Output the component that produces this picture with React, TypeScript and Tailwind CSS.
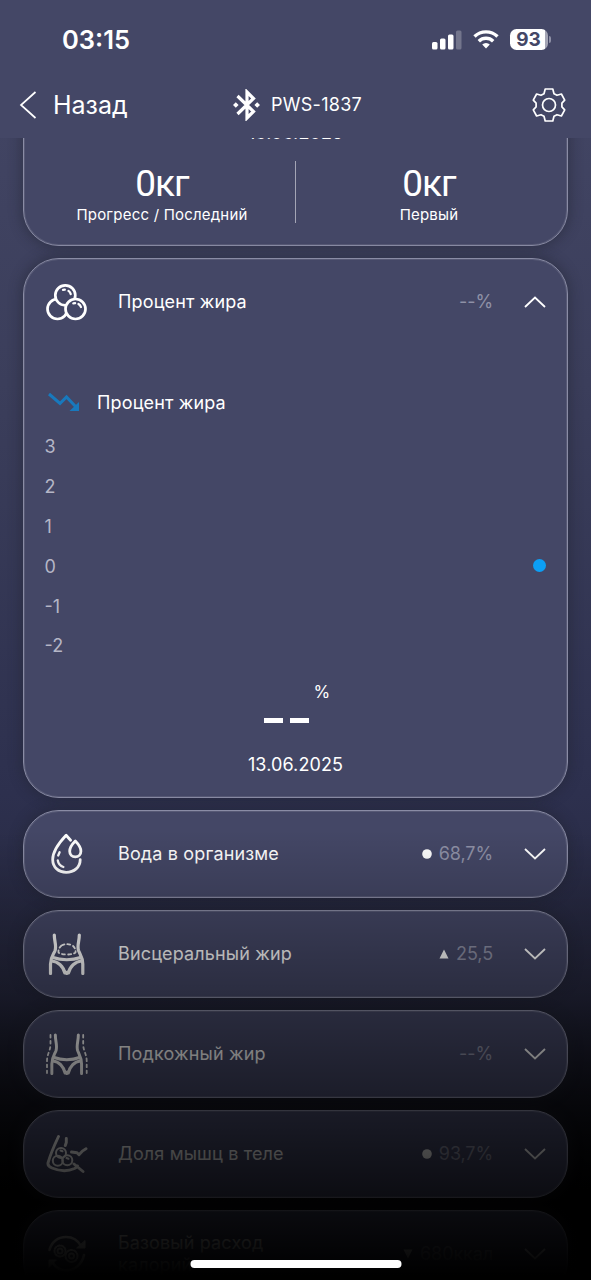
import type { ReactNode } from "react"

type Marker = "dot" | "up" | "down"

interface MetricRowProps {
  icon: ReactNode
  label: string
  value: string
  marker?: Marker
  open?: boolean
}

const CARD =
  "rounded-[36px] border border-[#8a8ca5] bg-[#444766] shadow-[0_0_12px_3px_rgba(32,36,48,0.4),inset_0_0_0_1px_rgba(255,255,255,0.1)]"

function BalloonsIcon() {
  return (
    <svg width="42" height="38" viewBox="0 0 42 38" fill="#444766" stroke="#fff" strokeWidth="2.7" strokeLinecap="round">
      <circle cx="11.5" cy="26" r="10" />
      <circle cx="19.300" cy="12.300" r="10" />
      <circle cx="29.500" cy="26" r="10" />
      <path d="M17 6.900l1.800-.2M22.500 7.900c1.200.8 1.900 1.800 2.200 3.200M27.300 20.300l1.800-.2M32.500 21c1.200.8 2 1.800 2.400 3" strokeWidth="2.300" fill="none" />
    </svg>
  )
}

function WaterIcon() {
  return (
    <svg width="42" height="42" viewBox="0 0 42 42" fill="none" stroke="#fff" strokeWidth="2.800" strokeLinecap="round" strokeLinejoin="round">
      <path d="M24.600 7.300L20.100 2.200C13.500 9.200 6.700 18.600 6.700 26.500c0 8 6 12.800 13.500 12.800 7.800 0 14-5 14-12.600" />
      <path d="M29.300 8c-3 3-5.600 7-5.600 10.200 0 3.300 2.300 5.600 5.600 5.600s5.600-2.300 5.600-5.600C34.900 15 32.300 11 29.300 8z" />
      <path d="M13.600 19.200l-1.400 3.300M11.800 27.500c.5 3.200 2.500 5.500 5.600 6.500" strokeWidth="2.300" />
    </svg>
  )
}

function Torso() {
  return (
    <>
      <path d="M8.300 2c0 7 2.400 10 .8 15.500C7.800 21 4.500 24 4.500 31v9.500M33.300 2c0 7-2.400 10-.8 15.500 1.300 3.500 4.300 6.500 4.300 13.500v9.500" />
      <path d="M7 24.500c8 3 19.500 3 27.500 0M5.800 28c6.200.5 11.700 5.500 13 12M35.500 28c-6.200.5-11.700 5.500-13 12M18 37.500l2.700 3 2.700-3" />
    </>
  )
}

function VisceralIcon() {
  return (
    <svg width="42" height="42" viewBox="0 0 42 42" fill="none" stroke="#fff" strokeWidth="3.200" strokeLinecap="round">
      <Torso />
      <path
        d="M15.500 12.500Q21 9.800 26.500 12.500Q30 15.500 29.500 19.500Q27 21.500 21 21.500Q15 21.500 12.500 19.500Q12 15.500 15.500 12.500z"
        strokeWidth="1.800"
        strokeDasharray="3 3"
      />
    </svg>
  )
}

function SubcutaneousIcon() {
  return (
    <svg width="42" height="42" viewBox="0 0 42 42" fill="none" stroke="#fff" strokeWidth="3.200" strokeLinecap="round">
      <g transform="translate(1.700) scale(.92 1)">
        <Torso />
      </g>
      <path
        d="M4.500 2v9c0 7-3.500 10-3.500 17v12M37.200 2v9c0 7 3.500 10 3.500 17v12"
        strokeWidth="1.800"
        strokeDasharray="2.600 3.400"
      />
    </svg>
  )
}

function MuscleIcon() {
  return (
    <svg width="42" height="40" viewBox="0 0 42 40" fill="none" stroke="#fff" strokeWidth="2.900" strokeLinecap="round" strokeLinejoin="round">
      <path d="M12.500 2.500C8 12 4.500 20 2 29c-.4 2.500 1 3.800 4 5 7 3 16 3.500 22.500.500 2-1 2.800-1.800 3-2.500M28 30l9 7.500M20.300 4.500v4l-1 3M25.500 18l5.500.7 2 2c1.500-2.500 4-4.500 7-6" />
      <g strokeWidth="2">
        <circle cx="15" cy="19" r="5" />
        <circle cx="11.800" cy="26.800" r="5" />
        <circle cx="21.300" cy="26.300" r="5" />
        <path d="M14.500 16.500l2 .8M20.500 24l2 .8" />
      </g>
    </svg>
  )
}

function MetabolismIcon() {
  return (
    <svg width="42" height="40" viewBox="0 0 42 40" fill="none" stroke="#fff" strokeWidth="2.600" strokeLinecap="round" strokeLinejoin="round">
      <path d="M3.500 16C5.500 8 12 3 20 3c7 0 12 3.500 15 9M38 21c-2 9-9 15.500-17.500 15.500-6 0-11-3-14-8" />
      <path d="M39 7v7h-8zM3 33v-7h7z" fill="#fff" strokeWidth="1" />
      <g strokeWidth="2">
        <circle cx="14" cy="17" r="5.500" strokeDasharray="2.200 1.600" />
        <circle cx="14" cy="17" r="2.500" />
        <circle cx="25.500" cy="22" r="6" strokeDasharray="2.200 1.600" />
        <circle cx="25.500" cy="22" r="2.500" />
      </g>
    </svg>
  )
}

function MarkerIcon({ type }: { type: Marker }) {
  return (
    <svg width="10" height="10" viewBox="0 0 10 10" fill="#fff">
      {type === "dot" && <circle cx="5" cy="5" r="4.800" />}
      {type === "up" && <path d="M5 .5L9.500 9.500H.5z" />}
      {type === "down" && <path d="M5 9.500L9.500.5H.5z" />}
    </svg>
  )
}

function MetricRow({ icon, label, value, marker, open }: MetricRowProps) {
  return (
    <div className="flex h-[86px] items-center pr-5 pl-[21px]">
      <div className="flex w-[43px] shrink-0 justify-center">{icon}</div>
      <div className="ml-[30px] w-[200px] text-[18px] leading-[22px] tracking-[0.150px]">{label}</div>
      <div className="ml-auto flex items-center gap-[7px]">
        {marker && <MarkerIcon type={marker} />}
        <span className="text-[18px] leading-[22px] tracking-[-0.100px] text-[#8f91a7]">{value}</span>
      </div>
      <svg
        className={open ? "ml-[30px] rotate-180" : "ml-[30px]"}
        width="24"
        height="14"
        viewBox="0 0 24 14"
        fill="none"
        stroke="#fff"
        strokeWidth="1.800"
      >
        <path d="M2 2l10 9.500L22 2" />
      </svg>
    </div>
  )
}

function StatusBar() {
  return (
    <div className="flex h-[79px] items-center justify-between pr-[40px] pl-[62px]">
      <span className="text-[25.500px] leading-8 font-semibold">03:15</span>
      <div className="flex items-center">
        <svg width="30" height="20" viewBox="0 0 30 20" fill="#fff">
          <rect x="0" y="12" width="5.500" height="7.500" rx="1.500" />
          <rect x="8" y="8.500" width="5.500" height="11" rx="1.500" />
          <rect x="16" y="4.500" width="5.500" height="15" rx="1.500" />
          <rect x="24" y="0.500" width="5.500" height="19" rx="1.500" opacity=".25" />
        </svg>
        <svg className="ml-[11px]" width="26" height="19" viewBox="0 0 26 19" fill="none" stroke="#fff" strokeWidth="3.400">
          <path d="M1.500 6.500a16.500 16.500 0 0 1 23 0M5.800 11.200a10.300 10.300 0 0 1 14.400 0" />
          <path d="M13 18.500l-3.800-4a5.500 5.500 0 0 1 7.600 0z" fill="#fff" stroke="none" />
        </svg>
        <div className="ml-[11px] flex h-[21px] w-[38px] items-center justify-center rounded-[6.500px] bg-linear-to-r from-white from-93% to-[#a4a5b5] to-93% pt-px text-[19px] leading-5 font-bold text-[#444766]">
          93
        </div>
        <div className="ml-px h-[7px] w-[2.500px] rounded-r-full bg-[#8f91a7]" />
      </div>
    </div>
  )
}

function Header() {
  return (
    <header className="relative z-10 h-[138px] bg-[#444766]">
      <StatusBar />
      <div className="grid h-[51px] grid-cols-[1fr_auto_1fr] items-center pr-[25px] pl-[19px]">
        <div className="flex items-center gap-[16px]">
          <svg width="18" height="28" viewBox="0 0 18 28" fill="none" stroke="#fff" strokeWidth="1.700">
            <path d="M16.500 1L2 14l14.500 13" />
          </svg>
          <span className="text-[25px] leading-8">Назад</span>
        </div>
        <div className="ml-[10px] flex items-center">
          <svg width="27" height="32" viewBox="0 0 27 32" fill="none" stroke="#fff" strokeWidth="3.200">
            <path d="M4.500 7l16 15.500-6.500 6.500V3l6.500 6.500-16 15.500" />
            <path d="M0 16l2.800-2.800L5.600 16l-2.800 2.800zM21.400 16l2.800-2.800L27 16l-2.800 2.800z" fill="#fff" stroke="none" />
          </svg>
          <span className="ml-[11px] text-[18px] leading-6 tracking-[0.300px]">PWS-1837</span>
        </div>
        <svg className="justify-self-end" width="34" height="36" viewBox="0 0 34 36" fill="none" stroke="#fff" strokeWidth="1.700" strokeLinejoin="round">
          <circle cx="17" cy="18" r="6.500" />
          <path d="M13.200 2h7.600l1.200 4.700 3 1.600 4.400-1.300 3.300 6.200-2.800 3v3.600l2.800 3-3.300 6.200-4.400-1.300-3 1.600-1.200 4.700h-7.600L12 29.300l-3-1.600L4.600 29l-3.300-6.200 2.800-3v-3.600l-2.800-3L4.600 7 9 8.300l3-1.600z" />
        </svg>
      </div>
    </header>
  )
}

function Stat({ label }: { label: string }) {
  return (
    <div className="flex flex-col items-center pt-[3px]">
      <span className="font-['Roboto',sans-serif] text-[37px] leading-[40px] tracking-[-1px]">0кг</span>
      <span className="mt-px text-[15px] leading-5 tracking-[0.200px]">{label}</span>
    </div>
  )
}

function WeightCard() {
  return (
    <section className={`${CARD} -mt-[60px] h-[168px] pt-[42px]`}>
      <div className="text-center text-[18px] leading-6 tracking-[0.100px]">13.06.2025</div>
      <div className="mt-[16px] grid grid-cols-[1fr_1px_1fr] px-[5px]">
        <Stat label="Прогресс / Последний" />
        <div className="h-[62px] bg-[#a4a5b5]" />
        <Stat label="Первый" />
      </div>
    </section>
  )
}

function FatCard() {
  const ticks = ["3", "2", "1", "0", "-1", "-2"]
  return (
    <section className={`${CARD} h-[540px]`}>
      <MetricRow icon={<BalloonsIcon />} label="Процент жира" value="--%" open />
      <div className="mt-[44px] flex h-[26px] items-center pl-[24px]">
        <svg width="32" height="21" viewBox="0 0 32 21" fill="none" stroke="#1879bd" strokeWidth="3">
          <path d="M1 2l11 9.500 6.500-6.500L28 15" />
          <path d="M31 10v9h-9.500z" fill="#1879bd" stroke="none" />
        </svg>
        <span className="ml-[17px] text-[18px] tracking-[0.150px]">Процент жира</span>
      </div>
      <div className="mt-[12px] flex items-center justify-between pr-[21px] pl-[20.500px]">
        <div className="text-[18px] text-[#b5b6c6]">
          {ticks.map((tick) => (
            <div key={tick} className="flex h-[39.800px] items-center">
              {tick}
            </div>
          ))}
        </div>
        <div className="mt-[39px] size-[13px] rounded-full bg-[#0c9ff5]" />
      </div>
      <div className="mt-[14px] flex h-[50px] justify-center pl-px">
        <div className="mt-[38px] flex gap-[7px]">
          <div className="h-[5px] w-[19px] bg-white" />
          <div className="h-[5px] w-[19px] bg-white" />
        </div>
        <span className="ml-[5px] w-[15px] text-[17px] leading-6">%</span>
      </div>
      <div className="mt-[23px] text-center text-[18px] leading-6 tracking-[0.100px]">13.06.2025</div>
    </section>
  )
}

export default function App() {
  const rows: MetricRowProps[] = [
    { icon: <WaterIcon />, label: "Вода в организме", value: "68,7%", marker: "dot" },
    { icon: <VisceralIcon />, label: "Висцеральный жир", value: "25,5", marker: "up" },
    { icon: <SubcutaneousIcon />, label: "Подкожный жир", value: "--%" },
    { icon: <MuscleIcon />, label: "Доля мышц в теле", value: "93,7%", marker: "dot" },
    { icon: <MetabolismIcon />, label: "Базовый расход калорий", value: "680ккал", marker: "down" },
  ]

  return (
    <div className="relative h-[1280px] w-[591px] overflow-hidden bg-[linear-gradient(180deg,#444766_0%,#3b3e5b_30%,#2d304e_62%,#25273d_78%,#000_93%)] font-['Inter',sans-serif] text-white">
      <Header />
      <main className="flex flex-col gap-3 px-[23px]">
        <WeightCard />
        <FatCard />
        {rows.map((row) => (
          <section key={row.label} className={`${CARD} h-[88px] shrink-0`}>
            <MetricRow {...row} />
          </section>
        ))}
      </main>
      {/* fade to black behind the home indicator */}
      <div className="absolute inset-x-0 bottom-0 h-[450px] bg-linear-to-b from-transparent to-black to-99%" />
      <div className="absolute bottom-[12px] left-1/2 h-2 w-[211px] -translate-x-1/2 rounded-full bg-white" />
    </div>
  )
}
